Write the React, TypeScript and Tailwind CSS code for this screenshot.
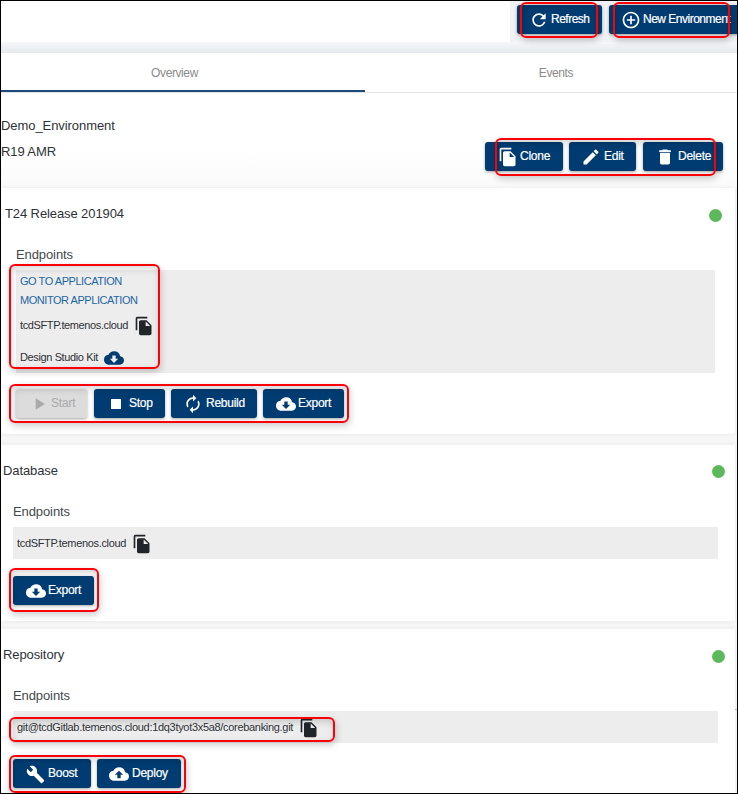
import type { ReactNode } from "react";
import type { IconType } from "react-icons";
import {
  MdAddCircleOutline,
  MdAutorenew,
  MdBuild,
  MdCloudDownload,
  MdCloudUpload,
  MdDelete,
  MdEdit,
  MdFileCopy,
  MdPlayArrow,
  MdRefresh,
  MdStop,
} from "react-icons/md";

type ActionProps = {
  icon: IconType;
  label: string;
  className: string;
  iconClass?: string;
  labelClass?: string;
  disabled?: boolean;
};

function Action({ icon: Icon, label, className, iconClass = "mt-px size-[20px]", labelClass = "ml-[3px] tracking-[-0.25px]", disabled }: ActionProps) {
  const tone = disabled
    ? "bg-[#dcdcdc] text-[#a9a9a9]"
    : "bg-[#003c71] text-white [-webkit-text-stroke:0.2px_white]";
  return (
    <button
      disabled={disabled}
      className={`flex h-[29px] shrink-0 items-center rounded-[3px] text-[12px] leading-none whitespace-nowrap shadow-[0_1px_3px_rgba(0,0,0,0.35)] ${tone} ${className}`}
    >
      <Icon className={`shrink-0 ${iconClass}`} strokeWidth={0} />
      <span className={`-mt-px ${labelClass}`}>{label}</span>
    </button>
  );
}

function Highlight({ className }: { className: string }) {
  return (
    <div
      className={`pointer-events-none absolute rounded-[6px] border-2 border-[#fb0007] shadow-[1px_3px_7px_rgba(0,0,0,0.2),inset_1px_3px_7px_rgba(0,0,0,0.16)] ${className}`}
    />
  );
}

function Status({ className = "" }: { className?: string }) {
  return <span className={`size-[13px] shrink-0 rounded-full bg-[#5cb85c] ${className}`} />;
}

function Card({ className, children }: { className: string; children: ReactNode }) {
  return (
    <section className={`w-[734px] shrink-0 bg-white shadow-[0_0_4px_rgba(0,0,0,0.07)] ${className}`}>
      {children}
    </section>
  );
}

export default function App() {
  return (
    <div className="flex h-[794px] w-[738px] flex-col overflow-hidden border border-black bg-[#f6f6f6] font-['Liberation_Sans',Arial,sans-serif] text-[13px] leading-none tracking-[-0.1px] text-[#2e3236]">
      <header className="flex h-[41px] shrink-0 bg-[#f0f2f5]">
        <div className="w-[509px] shrink-0 bg-white" />
        <div className="relative flex pt-1 pl-[7px]">
          <Action icon={MdRefresh} label="Refresh" className="w-[85px] pl-[12px]" labelClass="ml-[2px] tracking-[-0.5px]" iconClass="size-[20px]" />
          <Action icon={MdAddCircleOutline} label="New Environment" className="ml-[7px] w-[129px] rounded-r-none pl-[12px]" labelClass="ml-[2px] tracking-[-0.5px]" iconClass="size-[20px]" />
          <Highlight className="top-px left-[10px] h-[36px] w-[78px]" />
          <Highlight className="top-px left-[103px] h-[36px] w-[117px]" />
        </div>
      </header>
      <div className="h-[11px] shrink-0 bg-linear-to-b from-[#f6f7f9] to-[#e5e9ed]" />

      <nav className="flex h-[40px] shrink-0 border-b border-[#e4e4e4] bg-white text-[12px] tracking-[-0.4px] text-[#8a8a8a]">
        <div className="flex h-[39px] w-[364px] items-center justify-center border-b-2 border-[#1d4a7a]">
          <span className="mt-[2px] mr-[17px]">Overview</span>
        </div>
        <div className="flex flex-1 items-center justify-center pt-px pl-[10px]">Events</div>
      </nav>

      <section className="flex h-[95px] shrink-0 justify-between bg-linear-to-b from-white from-60% to-[#fafafa]">
        <div className="pt-[26px]">
          <h1 className="tracking-[-0.07px]">Demo_Environment</h1>
          <p className="mt-[13px]">R19 AMR</p>
        </div>
        <div className="relative mt-[49px] mr-[14px] flex h-[29px]">
          <Action icon={MdFileCopy} label="Clone" className="w-[78px] pl-[13px]" labelClass="ml-[2px] tracking-[-0.25px]" />
          <Action icon={MdEdit} label="Edit" className="ml-[6px] w-[67px] pl-[12px]" />
          <Action icon={MdDelete} label="Delete" className="ml-[7px] w-[80px] pl-[12px]" />
          <Highlight className="-top-[4px] left-[10px] h-[38px] w-[221px]" />
        </div>
      </section>

      <Card className="flex h-[246px] flex-col rounded-b-[4px]">
        <div className="flex justify-between pt-[20px] pr-[13px] pl-[4px]">
          <h2 className="-mt-px">T24 Release 201904</h2>
          <Status className="mt-px" />
        </div>
        <h3 className="mt-[26px] ml-[15px] text-[#45484c]">Endpoints</h3>
        <div className="relative mt-[9px] ml-[15px] h-[103px] w-[699px] shrink-0 bg-[#ededed] pl-[4px] text-[11px] tracking-[-0.38px]">
          <div className="flex flex-col tracking-[-0.45px] text-[#1d66a3]">
            <a className="mt-[6px]">GO TO APPLICATION</a>
            <a className="mt-[8px]">MONITOR APPLICATION</a>
          </div>
          <div className="mt-[9px] flex h-[20px] items-center">
            tcdSFTP.temenos.cloud
            <MdFileCopy className="mt-px ml-[6px] size-[20px] text-[#212529]" />
          </div>
          <div className="mt-[12px] flex h-[20px] items-center">
            Design Studio Kit
            <MdCloudDownload className="mt-[2px] ml-[6px] size-[20px] text-[#003c71]" />
          </div>
          <Highlight className="-top-[6px] -left-[7px] h-[105px] w-[151px]" />
        </div>
        <div className="relative mt-[16px] ml-[15px] flex">
          <Action icon={MdPlayArrow} label="Start" disabled className="w-[71px] pl-[13px]" labelClass="ml-[2px] tracking-[-0.2px]" />
          <Action icon={MdStop} label="Stop" className="ml-[7px] w-[71px] pl-[12px]" />
          <Action icon={MdAutorenew} label="Rebuild" className="ml-[6px] w-[86px] pl-[12px]" />
          <Action icon={MdCloudDownload} label="Export" className="ml-[6px] w-[81px] pl-[13px]" labelClass="ml-[2px] tracking-[-0.25px]" />
          <Highlight className="-top-[5px] -left-[7px] h-[39px] w-[340px]" />
        </div>
      </Card>

      <Card className="mt-[11px] flex h-[176px] flex-col">
        <div className="flex justify-between pt-[20px] pr-[10px] pl-[2px]">
          <h2 className="-mt-px">Database</h2>
          <Status />
        </div>
        <h3 className="mt-[27px] ml-[12px] text-[#45484c]">Endpoints</h3>
        <div className="mt-[9px] ml-[12px] flex h-[32px] w-[705px] items-center bg-[#ededed] pl-[4px] text-[11px] tracking-[-0.33px]">
          tcdSFTP.temenos.cloud
          <MdFileCopy className="mt-px ml-[6px] size-[20px] text-[#212529]" />
        </div>
        <div className="relative mt-[17px] ml-[12px] flex">
          <Action icon={MdCloudDownload} label="Export" className="w-[81px] pl-[13px]" labelClass="ml-[2px] tracking-[-0.25px]" />
          <Highlight className="-top-[8px] -left-[4px] h-[44px] w-[90px]" />
        </div>
      </Card>

      <div className="flex shrink-0">
        <Card className="mt-[8px] flex h-[164px] flex-col">
          <div className="flex justify-between pt-[20px] pr-[10px] pl-[2px]">
            <h2 className="-mt-px">Repository</h2>
            <Status className="mt-px" />
          </div>
          <h3 className="mt-[26px] ml-[12px] text-[#45484c]">Endpoints</h3>
          <div className="relative mt-[9px] ml-[12px] flex h-[32px] w-[705px] items-center bg-[#ededed] pl-[4px] text-[11px] tracking-[-0.31px]">
            git@tcdGitlab.temenos.cloud:1dq3tyot3x5a8/corebanking.git
            <MdFileCopy className="mt-[2px] ml-[6px] size-[20px] text-[#212529]" />
            <Highlight className="top-[6px] -left-[4px] h-[25px] w-[326px]" />
          </div>
          <div className="relative mt-[16px] ml-[12px] flex">
            <Action icon={MdBuild} label="Boost" className="w-[78px] pl-[13px]" iconClass="mt-px size-[19px]" />
            <Action icon={MdCloudUpload} label="Deploy" className="ml-[6px] w-[84px] pl-[12px]" />
            <Highlight className="-top-[4px] -left-[4px] h-[38px] w-[177px]" />
          </div>
        </Card>
        <div className="mt-[88px] w-[2px] border-t border-[#b5b5b5] bg-[#f1f1f1]" />
      </div>
    </div>
  );
}
